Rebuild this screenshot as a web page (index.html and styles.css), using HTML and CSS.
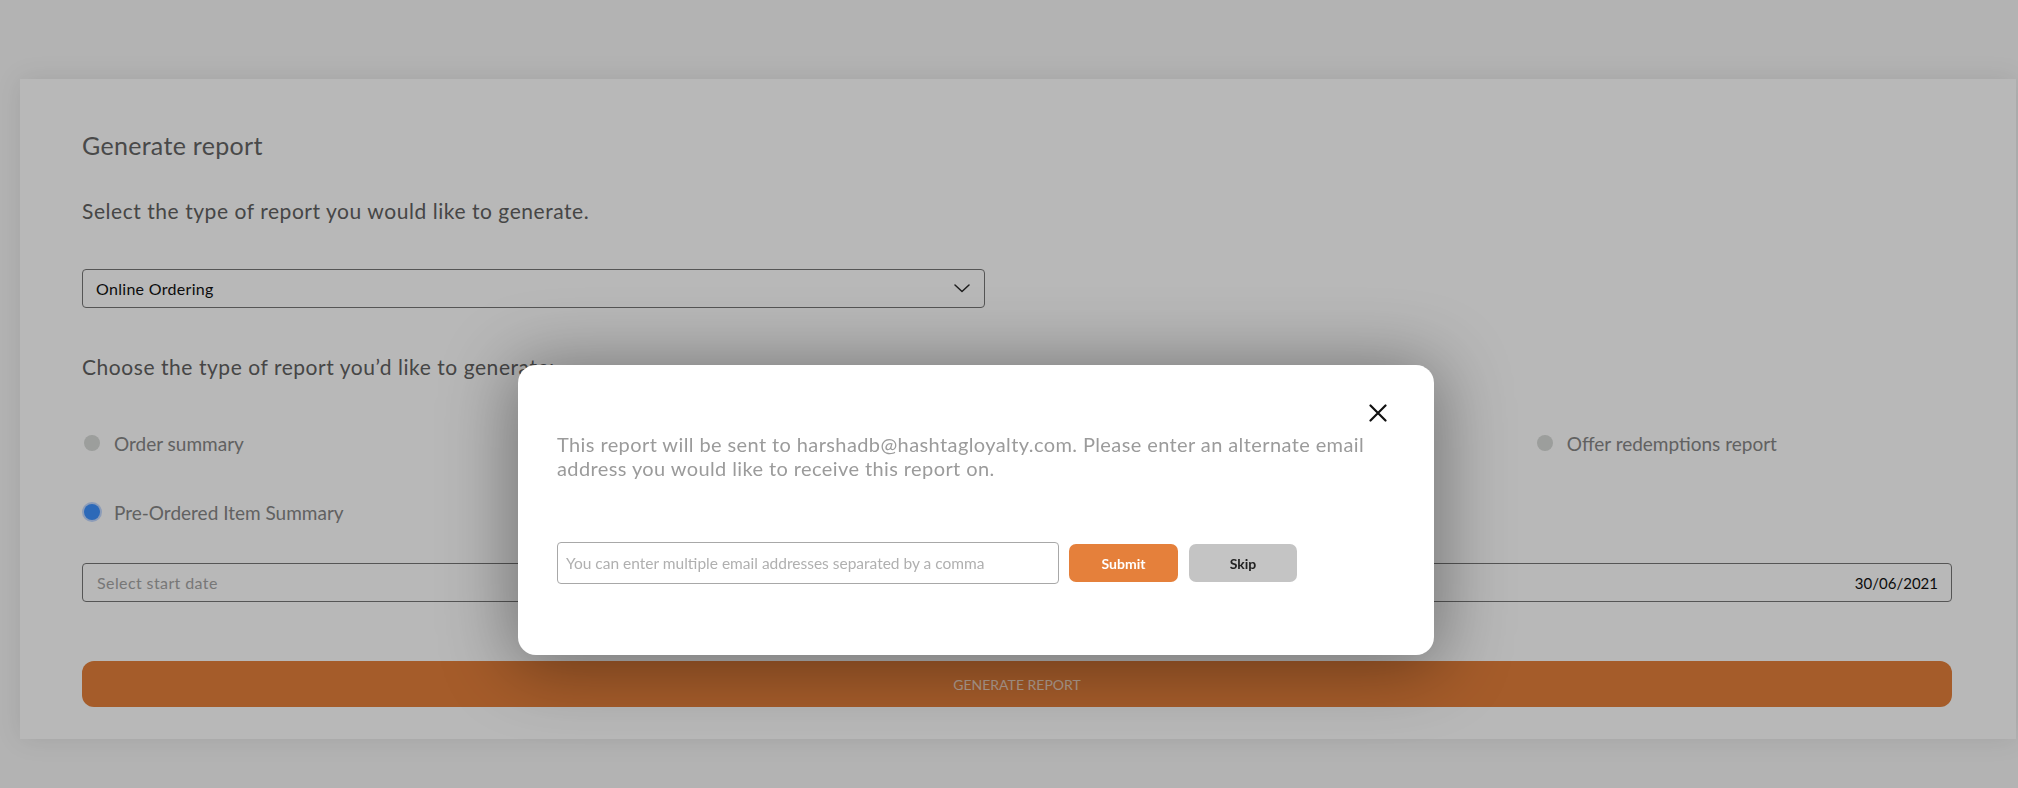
FILE: index.html
```html
<!DOCTYPE html>
<html lang="en">
<head>
<meta charset="utf-8">
<title>Generate report</title>
<link rel="stylesheet" href="styles.css">
</head>
<body>
<div class="page">
  <section class="card">
    <h1 class="title">Generate report</h1>
    <p class="label">Select the type of report you would like to generate.</p>
    <div class="select">
      <span class="select-value">Online Ordering</span>
      <svg class="chev" width="16" height="9" viewBox="0 0 16 9"><polyline points="1,1 8,7.5 15,1" fill="none" stroke="#2a2a2a" stroke-width="1.5" stroke-linecap="round" stroke-linejoin="round"/></svg>
    </div>
    <p class="label label-choose">Choose the type of report you’d like to generate:</p>
    <div class="options">
      <label class="opt"><span class="radio"></span>Order summary</label>
      <label class="opt"><span class="radio"></span>Customer report</label>
      <label class="opt"><span class="radio"></span>Item sales report</label>
      <label class="opt"><span class="radio"></span>Offer redemptions report</label>
      <label class="opt"><span class="radio radio-on"></span>Pre-Ordered Item Summary</label>
    </div>
    <div class="dates">
      <div class="date"><span class="date-ph">Select start date</span></div>
      <div class="date date-end"><span class="date-val">30/06/2021</span></div>
    </div>
    <button class="gen">GENERATE REPORT</button>
  </section>
</div>
<div class="overlay"></div>
<div class="modal">
  <button class="close" aria-label="Close">
    <svg width="18" height="18" viewBox="0 0 18 18"><path d="M1.5 1.5 L16.5 16.5 M16.5 1.5 L1.5 16.5" stroke="#111" stroke-width="2.2" stroke-linecap="round"/></svg>
  </button>
  <p class="modal-text">This report will be sent to harshadb@hashtagloyalty.com. Please enter an alternate email address you would like to receive this report on.</p>
  <div class="modal-form">
    <input class="email" type="text" placeholder="You can enter multiple email addresses separated by a comma">
    <button class="btn btn-submit">Submit</button>
    <button class="btn btn-skip">Skip</button>
  </div>
</div>
</body>
</html>
```
FILE: styles.css
```css
* { box-sizing: border-box; }
html, body { margin: 0; padding: 0; }
body {
  background: #f8f8f8;
  font-family: Lato, "Liberation Sans", sans-serif;
  width: 2018px;
  height: 788px;
  overflow: hidden;
}
.page {
  padding: 79px 2px 0 20px;
}
.card {
  background: #fff;
  box-shadow: 0 0 26px rgba(0,0,0,0.09);
  padding: 51px 64px 32px 62px;
}
.title {
  margin: 0;
  font-size: 25px;
  line-height: 30px;
  font-weight: 400;
  letter-spacing: 0.3px;
  color: #666;
}
.label {
  margin: 39px 0 0;
  font-size: 21px;
  line-height: 24px;
  letter-spacing: 0.55px;
  color: #626262;
}
.label-choose { margin-top: 47px; }
.select {
  margin-top: 46px;
  width: 903px;
  height: 39px;
  border: 1.5px solid #777;
  border-radius: 4px;
  display: flex;
  align-items: center;
  justify-content: space-between;
  padding: 0 14px 0 13px;
}
.select-value {
  font-size: 16px;
  letter-spacing: 0.3px;
  color: #111;
}
.chev { display: block; }
.options {
  margin-top: 52px;
  display: grid;
  grid-template-columns: repeat(4, 1fr);
  column-gap: 67px;
  row-gap: 45px;
}
.opt {
  display: flex;
  align-items: center;
  height: 24px;
  padding-left: 2px;
  font-size: 19px;
  color: #878787;
}
.radio {
  width: 16px;
  height: 16px;
  border-radius: 50%;
  background: #d8dbd8;
  margin-right: 14px;
  flex: none;
}
.radio-on {
  background: #3e92ff;
  box-shadow: 0 0 0 2px rgba(120,170,255,0.45);
}
.dates {
  margin-top: 39px;
  display: grid;
  grid-template-columns: 1fr 1fr;
  column-gap: 40px;
}
.date {
  height: 39px;
  border: 1.5px solid #777;
  border-radius: 4px;
  display: flex;
  align-items: center;
  padding: 0 13px 0 14px;
}
.date-end { justify-content: flex-end; }
.date-ph { font-size: 16px; letter-spacing: 0.4px; color: #a6a6a6; }
.date-val { font-size: 15px; color: #111; }
.gen {
  display: block;
  width: 100%;
  margin-top: 59px;
  height: 46px;
  border: none;
  border-radius: 12px;
  background: #e5803b;
  color: rgba(255,255,255,0.72);
  font-family: Lato, "Liberation Sans", sans-serif;
  font-size: 14px;
  letter-spacing: 0;
}
.overlay {
  position: fixed;
  inset: 0;
  background: rgba(0,0,0,0.28);
  z-index: 10;
}
.modal {
  position: absolute;
  left: 518px;
  top: 365px;
  width: 916px;
  height: 290px;
  background: #fff;
  border-radius: 18px;
  box-shadow: 0 6px 70px 6px rgba(0,0,0,0.38);
  z-index: 20;
  padding: 67px 56px 0 39px;
}
.close {
  position: absolute;
  top: 39px;
  right: 47px;
  width: 18px;
  height: 18px;
  padding: 0;
  border: none;
  background: none;
}
.close svg { display: block; }
.modal-text {
  margin: 0;
  max-width: 821px;
  font-size: 20px;
  line-height: 24px;
  color: #9b9b9b;
  letter-spacing: 0.4px;
}
.modal-form {
  margin-top: 62px;
  display: flex;
  align-items: center;
}
.email {
  width: 502px;
  height: 42px;
  border: 1px solid #a8a8a8;
  border-radius: 4px;
  padding: 0 8px;
  font-family: Lato, "Liberation Sans", sans-serif;
  font-size: 15.5px;
  outline: none;
}
.email::placeholder { color: #b0b0b0; }
.btn {
  height: 38px;
  border: none;
  border-radius: 7px;
  font-family: Lato, "Liberation Sans", sans-serif;
  font-size: 14px;
  font-weight: 700;
}
.btn-submit {
  width: 109px;
  margin-left: 10px;
  background: #e5803b;
  color: #fff;
}
.btn-skip {
  width: 108px;
  margin-left: 11px;
  background: #c4c4c4;
  color: #222;
}
```
